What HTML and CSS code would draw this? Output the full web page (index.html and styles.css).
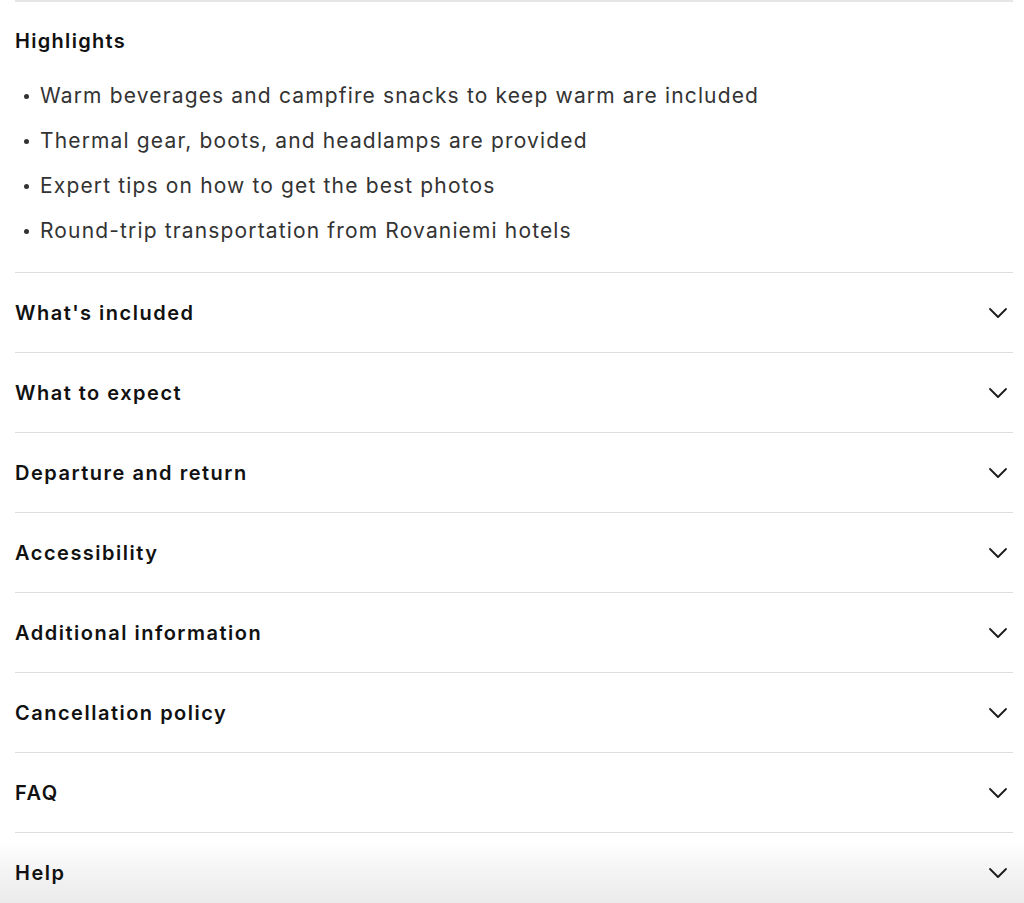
FILE: index.html
```html
<!DOCTYPE html>
<html lang="en">
<head>
<meta charset="utf-8">
<title>Tour details</title>
<link rel="stylesheet" href="styles.css">
</head>
<body>
<main class="page">
  <section class="highlights">
    <h2 class="highlights-title">Highlights</h2>
    <ul class="bullets">
      <li>Warm beverages and campfire snacks to keep warm are included</li>
      <li>Thermal gear, boots, and headlamps are provided</li>
      <li>Expert tips on how to get the best photos</li>
      <li>Round-trip transportation from Rovaniemi hotels</li>
    </ul>
  </section>
  <div class="accordion">
    <div class="row"><span class="row-title">What's included</span><svg class="chev" viewBox="0 0 20 12"><path d="M2 2 L10 10 L18 2"/></svg></div>
    <div class="row"><span class="row-title">What to expect</span><svg class="chev" viewBox="0 0 20 12"><path d="M2 2 L10 10 L18 2"/></svg></div>
    <div class="row"><span class="row-title">Departure and return</span><svg class="chev" viewBox="0 0 20 12"><path d="M2 2 L10 10 L18 2"/></svg></div>
    <div class="row"><span class="row-title">Accessibility</span><svg class="chev" viewBox="0 0 20 12"><path d="M2 2 L10 10 L18 2"/></svg></div>
    <div class="row"><span class="row-title">Additional information</span><svg class="chev" viewBox="0 0 20 12"><path d="M2 2 L10 10 L18 2"/></svg></div>
    <div class="row"><span class="row-title">Cancellation policy</span><svg class="chev" viewBox="0 0 20 12"><path d="M2 2 L10 10 L18 2"/></svg></div>
    <div class="row"><span class="row-title">FAQ</span><svg class="chev" viewBox="0 0 20 12"><path d="M2 2 L10 10 L18 2"/></svg></div>
    <div class="row"><span class="row-title">Help</span><svg class="chev" viewBox="0 0 20 12"><path d="M2 2 L10 10 L18 2"/></svg></div>
  </div>
</main>
</body>
</html>
```
FILE: styles.css
```css
html, body {
  margin: 0;
  padding: 0;
}
body {
  font-family: "Inter", "Noto Sans", sans-serif;
  color: #1a1a1a;
  overflow: hidden;
  height: 903px;
  background: linear-gradient(to bottom, #ffffff 0, #ffffff 842px, #f4f4f4 870px, #ebebeb 903px);
}
.page {
  margin: 0 11px 0 15px;
  border-top: 2px solid #e6e6e6;
}
.highlights {
  padding: 25px 0 19px;
}
.highlights-title {
  margin: 0;
  font-size: 20px;
  line-height: 28px;
  font-weight: 600;
  letter-spacing: 1.3px;
  color: #111;
}
.bullets {
  list-style: none;
  margin: 18px 0 0;
  padding: 0;
}
.bullets li {
  position: relative;
  padding-left: 25px;
  font-size: 21px;
  line-height: 45px;
  letter-spacing: 1.15px;
  color: #333;
}
.bullets li::before {
  content: "";
  position: absolute;
  left: 9px;
  top: 21px;
  width: 5px;
  height: 5px;
  border-radius: 50%;
  background: #333;
}
.row {
  height: 79px;
  border-top: 1px solid #dedede;
  display: flex;
  align-items: center;
  justify-content: space-between;
}
.row-title {
  font-size: 20px;
  font-weight: 600;
  letter-spacing: 1.5px;
  color: #111;
}
.chev {
  width: 20px;
  height: 12px;
  margin-right: 5px;
  fill: none;
  stroke: #1a1a1a;
  stroke-width: 1.8;
  stroke-linecap: round;
  stroke-linejoin: round;
}
```
